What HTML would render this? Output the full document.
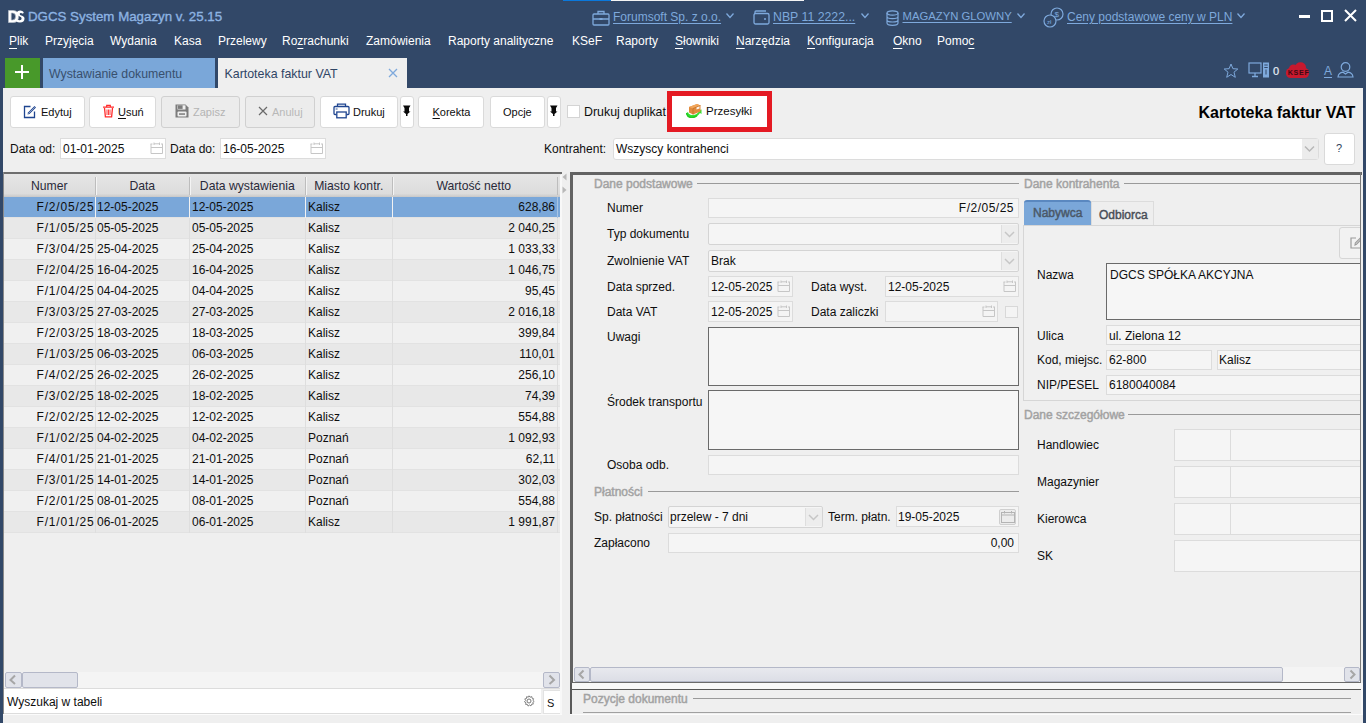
<!DOCTYPE html><html><head><meta charset="utf-8"><style>
html,body{margin:0;padding:0}
body{width:1366px;height:723px;overflow:hidden;position:relative;background:#324868;font-family:"Liberation Sans", sans-serif;}
div{box-sizing:border-box}
.t{position:absolute;white-space:nowrap;line-height:1}
.btn{position:absolute;background:#fff;border:1px solid #dadada;border-radius:3px;box-sizing:border-box}
.dis{background:#ececec;border-color:#d0d0d0}
.inp{position:absolute;background:#fff;border:1px solid #dcdcdc;box-sizing:border-box}
.ro{position:absolute;background:#f5f5f5;border:1px solid #dcdcdc;box-sizing:border-box}
.ta{position:absolute;background:#f6f6f6;border:1px solid #6a6a6a;box-sizing:border-box}
.u{text-decoration:underline;text-underline-offset:3px}
.lk{text-decoration:underline;text-underline-offset:2px}
.ub{text-decoration:underline;text-underline-offset:1.5px}
</style></head><body>
<div style="position:absolute;left:563px;top:0px;width:48px;height:1px;background:#0a78dc"></div>
<div style="position:absolute;left:611px;top:0px;width:193px;height:1px;background:#f4f4f4"></div>
<svg style="position:absolute;left:8px;top:10px" width="17" height="13" viewBox="0 0 17 13"><path d="M0.5 0.5 H5 Q10.5 0.5 10.5 6.5 Q10.5 12.5 5 12.5 H0.5 Z M3.2 3 V10 H4.8 Q7.6 10 7.6 6.5 Q7.6 3 4.8 3 Z" fill="#fff" fill-rule="evenodd" stroke="#b8c0cc" stroke-width="0.7"/><path d="M15.8 2.2 Q14.5 0.6 12.3 0.6 Q8.8 0.6 8.8 3.6 Q8.8 5.6 11.8 6.4 Q13.6 6.9 13.6 8.4 Q13.6 10.2 11.8 10.2 Q10 10.2 8.8 9 L8 11.3 Q9.6 12.6 12 12.6 Q16.5 12.6 16.5 8.6 Q16.5 6.4 13.3 5.5 Q11.7 5 11.7 3.9 Q11.7 2.9 12.8 2.9 Q14.1 2.9 15 3.8 Z" fill="#fff"/></svg>
<div class="t" style="left:28px;top:9.74px;font-size:13.3px;color:#8db3e2;-webkit-text-stroke:0.35px #8db3e2">DGCS System Magazyn v. 25.15</div>
<div class="t" style="left:9px;top:34.84px;font-size:12px;color:#ffffff;"><span class="u">P</span>lik</div>
<div class="t" style="left:45px;top:34.84px;font-size:12px;color:#ffffff;">Przyjęcia</div>
<div class="t" style="left:110px;top:34.84px;font-size:12px;color:#ffffff;">Wydania</div>
<div class="t" style="left:174px;top:34.84px;font-size:12px;color:#ffffff;">Kasa</div>
<div class="t" style="left:218px;top:34.84px;font-size:12px;color:#ffffff;">Przelewy</div>
<div class="t" style="left:282px;top:34.84px;font-size:12px;color:#ffffff;">Ro<span class="u">z</span>rachunki</div>
<div class="t" style="left:366px;top:34.84px;font-size:12px;color:#ffffff;">Zamówienia</div>
<div class="t" style="left:448px;top:34.84px;font-size:12px;color:#ffffff;">Raporty analityczne</div>
<div class="t" style="left:572px;top:34.84px;font-size:12px;color:#ffffff;">KSeF</div>
<div class="t" style="left:616px;top:34.84px;font-size:12px;color:#ffffff;">Raporty</div>
<div class="t" style="left:675px;top:34.84px;font-size:12px;color:#ffffff;"><span class="u">S</span>łowniki</div>
<div class="t" style="left:736px;top:34.84px;font-size:12px;color:#ffffff;"><span class="u">N</span>arzędzia</div>
<div class="t" style="left:807px;top:34.84px;font-size:12px;color:#ffffff;"><span class="u">K</span>onfiguracja</div>
<div class="t" style="left:893px;top:34.84px;font-size:12px;color:#ffffff;"><span class="u">O</span>kno</div>
<div class="t" style="left:937px;top:34.84px;font-size:12px;color:#ffffff;">Pomo<span class="u">c</span></div>
<svg style="position:absolute;left:592px;top:10px" width="18" height="16" viewBox="0 0 18 16"><rect x="1" y="4" width="16" height="11" rx="1" fill="none" stroke="#7ea9dc" stroke-width="1.3"/><path d="M6 4 V1.5 H12 V4 M1 9 H17" fill="none" stroke="#7ea9dc" stroke-width="1.3"/><rect x="7.5" y="8" width="3" height="2" fill="#7ea9dc"/></svg>
<div class="t" style="left:613px;top:10.84px;font-size:12px;color:#7ea9dc;text-decoration:underline;text-underline-offset:2px">Forumsoft Sp. z o.o.</div>
<svg style="position:absolute;left:725px;top:12px" width="10" height="7" viewBox="0 0 10 7"><path d="M1.5 1.5 L5 5.5 L8.5 1.5" fill="none" stroke="#7ea9dc" stroke-width="1.3"/></svg>
<svg style="position:absolute;left:753px;top:10px" width="17" height="15" viewBox="0 0 17 15"><path d="M2 4 L2 2 Q2 1 3 1 L13 1" fill="none" stroke="#7ea9dc" stroke-width="1.3"/><rect x="1" y="3.5" width="15" height="10.5" rx="1.5" fill="none" stroke="#7ea9dc" stroke-width="1.3"/><circle cx="12" cy="9" r="1" fill="#7ea9dc"/></svg>
<div class="t" style="left:773px;top:10.59px;font-size:12.3px;color:#7ea9dc;text-decoration:underline;text-underline-offset:2px">NBP 11 2222...</div>
<svg style="position:absolute;left:860px;top:12px" width="10" height="7" viewBox="0 0 10 7"><path d="M1.5 1.5 L5 5.5 L8.5 1.5" fill="none" stroke="#7ea9dc" stroke-width="1.3"/></svg>
<svg style="position:absolute;left:886px;top:10px" width="13" height="16" viewBox="0 0 13 16"><ellipse cx="6.5" cy="3" rx="5.5" ry="2.2" fill="none" stroke="#7ea9dc" stroke-width="1.2"/><path d="M1 3 V13 Q1 15.3 6.5 15.3 Q12 15.3 12 13 V3 M1 6.5 Q1 8.7 6.5 8.7 Q12 8.7 12 6.5 M1 10 Q1 12 6.5 12 Q12 12 12 10" fill="none" stroke="#7ea9dc" stroke-width="1.2"/></svg>
<div class="t" style="left:902.5px;top:11.43px;font-size:11.3px;color:#7ea9dc;text-decoration:underline;text-underline-offset:2px">MAGAZYN GLOWNY</div>
<svg style="position:absolute;left:1016px;top:12px" width="10" height="7" viewBox="0 0 10 7"><path d="M1.5 1.5 L5 5.5 L8.5 1.5" fill="none" stroke="#7ea9dc" stroke-width="1.3"/></svg>
<svg style="position:absolute;left:1043px;top:7px" width="21" height="21" viewBox="0 0 21 21"><circle cx="14" cy="7" r="6" fill="none" stroke="#7ea9dc" stroke-width="1.2"/><circle cx="7" cy="14" r="6" fill="#324868" stroke="#7ea9dc" stroke-width="1.2"/><text x="11.5" y="10" font-family="Liberation Sans" font-size="8" fill="#7ea9dc">$</text><text x="4" y="17" font-family="Liberation Sans" font-size="6" fill="#7ea9dc">zł</text></svg>
<div class="t" style="left:1067px;top:10.84px;font-size:12px;color:#7ea9dc;text-decoration:underline;text-underline-offset:2px">Ceny podstawowe ceny w PLN</div>
<svg style="position:absolute;left:1236px;top:12px" width="10" height="7" viewBox="0 0 10 7"><path d="M1.5 1.5 L5 5.5 L8.5 1.5" fill="none" stroke="#7ea9dc" stroke-width="1.3"/></svg>
<div style="position:absolute;left:1299px;top:15px;width:11px;height:2.5px;background:#fff"></div>
<div style="position:absolute;left:1321px;top:10px;width:12px;height:12px;border:2px solid #fff"></div>
<svg style="position:absolute;left:1344px;top:9px" width="13" height="13" viewBox="0 0 13 13"><path d="M1 1 L12 12 M12 1 L1 12" stroke="#fff" stroke-width="2"/></svg>
<svg style="position:absolute;left:1223px;top:63px" width="16" height="16" viewBox="0 0 16 16"><path d="M8 1 L9.9 5.7 L14.8 6 L11 9.2 L12.3 14.3 L8 11.5 L3.7 14.3 L5 9.2 L1.2 6 L6.1 5.7 Z" fill="none" stroke="#7ea9dc" stroke-width="1"/></svg>
<svg style="position:absolute;left:1248px;top:62px" width="22" height="16" viewBox="0 0 22 16"><rect x="1" y="1" width="12" height="10" fill="none" stroke="#7ea9dc" stroke-width="1.2"/><path d="M7 11 V14 M4 14.5 H10" stroke="#7ea9dc" stroke-width="1.3"/><rect x="15" y="0.5" width="6" height="15" fill="#7ea9dc"/><rect x="16.3" y="2.5" width="3.4" height="1" fill="#324868"/><rect x="16.3" y="5" width="3.4" height="1" fill="#324868"/><rect x="17.5" y="7.5" width="1" height="5" fill="#324868"/></svg>
<div class="t" style="left:1273px;top:65.69px;font-size:11px;color:#e8eef6;-webkit-text-stroke:0.2px #e8eef6">0</div>
<svg style="position:absolute;left:1286px;top:62px" width="24" height="17" viewBox="0 0 24 17"><g fill="#c8192e"><rect x="0" y="6" width="23" height="10" rx="4.5"/><ellipse cx="7.5" cy="6.5" rx="4.5" ry="4"/><ellipse cx="14.5" cy="5.2" rx="5.5" ry="5"/></g><text x="1.8" y="12.6" font-family="Liberation Sans" font-weight="bold" font-size="7.2" fill="#3c0a12" letter-spacing="0.6">KSEF</text></svg>
<div class="t" style="left:1324px;top:64.84px;font-size:12px;color:#7ea9dc;text-decoration:underline;text-underline-offset:2px">A</div>
<svg style="position:absolute;left:1337px;top:62px" width="17" height="16" viewBox="0 0 17 16"><circle cx="8.5" cy="5" r="4.3" fill="none" stroke="#7ea9dc" stroke-width="1.2"/><path d="M1 15 Q1.5 10.8 6 10.2 L8.5 12 L11 10.2 Q15.5 10.8 16 15 Z" fill="none" stroke="#7ea9dc" stroke-width="1.2"/></svg>
<div style="position:absolute;left:5px;top:58px;width:35px;height:30px;background:#48992a"></div>
<div style="position:absolute;left:15px;top:71px;width:14px;height:2px;background:#fff"></div>
<div style="position:absolute;left:21px;top:65px;width:2px;height:14px;background:#fff"></div>
<div style="position:absolute;left:43px;top:58px;width:172px;height:30px;background:#7aa7d9"></div>
<div class="t" style="left:49px;top:67.59px;font-size:12.3px;color:#38506e;">Wystawianie dokumentu</div>
<div style="position:absolute;left:218px;top:58px;width:189px;height:30px;background:#efefef"></div>
<div class="t" style="left:224.5px;top:67.50px;font-size:12.4px;color:#2f4565;">Kartoteka faktur VAT</div>
<svg style="position:absolute;left:388px;top:68px" width="10" height="10" viewBox="0 0 10 10"><path d="M1 1 L9 9 M9 1 L1 9" stroke="#7ea9dc" stroke-width="1.3"/></svg>
<div style="position:absolute;left:3px;top:88px;width:1360px;height:635px;background:#efefef"></div>
<div class="btn" style="left:10px;top:96px;width:75px;height:32px"></div>
<svg style="position:absolute;left:23px;top:104px" width="15" height="15" viewBox="0 0 15 15"><path d="M7.5 2.5 H1.5 V13.5 H11.5 V7.5" fill="none" stroke="#1f4590" stroke-width="1.3"/><path d="M4.5 10.5 L5 8.5 L11.5 2 L13 3.5 L6.5 10 Z" fill="#1f4590"/><path d="M5.3 9.7 L11.8 3.2" stroke="#fff" stroke-width="0.5"/></svg>
<div class="t" style="left:41px;top:106.69px;font-size:11px;color:#0e0e0e;">Edytuj</div>
<div class="btn" style="left:89px;top:96px;width:67px;height:32px"></div>
<svg style="position:absolute;left:102px;top:104px" width="13" height="14" viewBox="0 0 13 14"><path d="M1 3.2 H12 M4.7 3 V1.3 H8.3 V3" fill="none" stroke="#ff2b2b" stroke-width="1.2"/><path d="M2.5 4 L3.4 12.8 H9.6 L10.5 4" fill="none" stroke="#ff2b2b" stroke-width="1.3"/><path d="M5 5.5 V11 M6.5 5.5 V11 M8 5.5 V11" stroke="#ff2b2b" stroke-width="0.9"/></svg>
<div class="t" style="left:118px;top:106.69px;font-size:11px;color:#0e0e0e;"><span class="ub">U</span>suń</div>
<div class="btn dis" style="left:161px;top:96px;width:79px;height:32px"></div>
<svg style="position:absolute;left:175px;top:104px" width="14" height="14" viewBox="0 0 14 14"><path d="M0.5 0.5 H10.5 L13.5 3.5 V13.5 H0.5 Z" fill="#7c7c7c"/><rect x="2.5" y="1.3" width="8" height="4.2" fill="#efefef"/><rect x="3" y="1.3" width="4.6" height="3.6" fill="#7c7c7c"/><rect x="2.5" y="7.5" width="9" height="5" rx="1" fill="#efefef"/><rect x="4" y="9.3" width="6" height="1.5" fill="#7c7c7c"/></svg>
<div class="t" style="left:193px;top:106.69px;font-size:11px;color:#b4b4b4;">Zapisz</div>
<div class="btn dis" style="left:245px;top:96px;width:70px;height:32px"></div>
<svg style="position:absolute;left:258px;top:106px" width="10" height="10" viewBox="0 0 10 10"><path d="M1 1 L9 9 M9 1 L1 9" stroke="#6a6a6a" stroke-width="1.2"/></svg>
<div class="t" style="left:272px;top:106.69px;font-size:11px;color:#b8b8b8;">Anuluj</div>
<div class="btn" style="left:320px;top:96px;width:78px;height:32px"></div>
<svg style="position:absolute;left:333px;top:103px" width="17" height="16" viewBox="0 0 17 16"><path d="M4.5 3.5 V1.2 H12.5 V3.5" fill="none" stroke="#1f4590" stroke-width="1.3"/><path d="M3.5 11.5 H2 Q1 11.5 1 10.5 V4.5 Q1 3.5 2 3.5 H15 Q16 3.5 16 4.5 V10.5 Q16 11.5 15 11.5 H13.5" fill="none" stroke="#1f4590" stroke-width="1.3"/><rect x="3.8" y="9" width="9.4" height="5.8" fill="#fff" stroke="#1f4590" stroke-width="1.3"/><path d="M2.6 6 H4.6" stroke="#1f4590" stroke-width="0.9"/></svg>
<div class="t" style="left:353px;top:106.69px;font-size:11px;color:#0e0e0e;">Drukuj</div>
<div class="btn" style="left:400px;top:96px;width:14px;height:32px"></div>
<svg style="position:absolute;left:403px;top:105px" width="8" height="12" viewBox="0 0 8 12"><path d="M0 0.5 H7.5 L6 3 V6.5 H7.5 L4.5 9 V11 H3 V9 L0 6.5 H1.5 V3 Z" fill="#0a0a0a"/></svg>
<div class="btn" style="left:418px;top:96px;width:66px;height:32px"></div>
<div class="t" style="left:432.5px;top:106.69px;font-size:11px;color:#0e0e0e;"><span class="ub">K</span>orekta</div>
<div class="btn" style="left:490px;top:96px;width:55px;height:32px"></div>
<div class="t" style="left:503px;top:106.69px;font-size:11px;color:#0e0e0e;">Opcje</div>
<div class="btn" style="left:547px;top:96px;width:14px;height:32px"></div>
<svg style="position:absolute;left:550px;top:105px" width="8" height="12" viewBox="0 0 8 12"><path d="M0 0.5 H7.5 L6 3 V6.5 H7.5 L4.5 9 V11 H3 V9 L0 6.5 H1.5 V3 Z" fill="#0a0a0a"/></svg>
<div style="position:absolute;left:567px;top:105px;width:13px;height:13px;background:#fff;border:1px solid #d4d4d4"></div>
<div class="t" style="left:584px;top:105.50px;font-size:12.4px;color:#0e0e0e;">Drukuj duplikat</div>
<div style="position:absolute;left:667px;top:91px;width:105px;height:41px;border:5px solid #e41a23;background:#fff"></div>
<svg style="position:absolute;left:686px;top:103px" width="17" height="15" viewBox="0 0 17 15"><path d="M0.5 10 Q1 14.5 6 14.5 Q11 14.5 14 10 L15.5 11 L15.5 6.5 L11.5 7.5 L13 8.5 Q10 12.5 6 12 Q2.5 11.5 2 9 Z" fill="#33e030"/><path d="M3 4 L11 1 L14.5 2.5 L14.5 8.5 L7 11.5 L3 9.5 Z" fill="#e08a3c"/><path d="M3 4 L11 1 L14.5 2.5 L7 5.5 Z" fill="#f2a65a"/><path d="M7 5.5 V11.5 M7 5.5 L14.5 2.5" stroke="#b8641e" stroke-width="0.6" fill="none"/><path d="M10.5 4.5 L13.5 3.3 L13.5 5.5 L10.5 6.6 Z" fill="#fff" opacity="0.9"/><path d="M0.5 10 Q1 14.5 6 14.5 Q9 14.5 11 12.5" fill="none" stroke="#22c820" stroke-width="1.5"/></svg>
<div class="t" style="left:706px;top:106.27px;font-size:11.5px;color:#0e0e0e;">Przesyłki</div>
<div class="t" style="left:1198.5px;top:105.26px;font-size:16px;color:#000;font-weight:bold">Kartoteka faktur VAT</div>
<div class="t" style="left:10px;top:142.84px;font-size:12px;color:#0e0e0e;">Data od:</div>
<div class="inp" style="left:60px;top:138px;width:106px;height:21px;background:#fff;border-color:#dcdcdc"></div>
<svg style="position:absolute;left:150px;top:142px" width="14" height="13" viewBox="0 0 14 13"><path d="M1 2 V11.5 H12.5 V2 M0.5 2 H2.5 M11 2 H13 M1 5.5 H12.5 M4 0.5 V3 M9.5 0.5 V3 M4 1.8 H9.5" fill="none" stroke="#c6c6c6" stroke-width="1"/></svg>
<div class="t" style="left:63px;top:142.84px;font-size:12px;color:#0e0e0e;">01-01-2025</div>
<div class="t" style="left:170px;top:142.84px;font-size:12px;color:#0e0e0e;">Data do:</div>
<div class="inp" style="left:220px;top:138px;width:106px;height:21px;background:#fff;border-color:#dcdcdc"></div>
<svg style="position:absolute;left:310px;top:142px" width="14" height="13" viewBox="0 0 14 13"><path d="M1 2 V11.5 H12.5 V2 M0.5 2 H2.5 M11 2 H13 M1 5.5 H12.5 M4 0.5 V3 M9.5 0.5 V3 M4 1.8 H9.5" fill="none" stroke="#c6c6c6" stroke-width="1"/></svg>
<div class="t" style="left:223px;top:142.84px;font-size:12px;color:#0e0e0e;">16-05-2025</div>
<div class="t" style="left:544px;top:142.84px;font-size:12px;color:#0e0e0e;">Kontrahent:</div>
<div class="inp" style="left:613px;top:138px;width:706px;height:22px;border-radius:3px"></div>
<div class="t" style="left:616px;top:142.84px;font-size:12px;color:#0e0e0e;">Wszyscy kontrahenci</div>
<div style="position:absolute;left:1302px;top:139px;width:16px;height:20px;background:#ececec"></div>
<svg style="position:absolute;left:1304px;top:145px" width="11" height="8" viewBox="0 0 11 8"><path d="M1 1.5 L5.5 6 L10 1.5" fill="none" stroke="#b8b8b8" stroke-width="1.5"/></svg>
<div class="btn" style="left:1324px;top:133px;width:31px;height:32px"></div>
<div class="t" style="left:1336px;top:142.69px;font-size:11px;color:#30405a;">?</div>
<div style="position:absolute;left:3px;top:172px;width:1px;height:542px;background:#8a8a8a"></div>
<div style="position:absolute;left:4px;top:172px;width:558px;height:2px;background:#6e6e6e"></div>
<div style="position:absolute;left:4px;top:174px;width:558px;height:1px;background:#f6f6f6"></div>
<div style="position:absolute;left:4px;top:174px;width:557px;height:23px;background:linear-gradient(#e6e6e6,#dcdcdc 85%,#c8c8c8)"></div>
<div style="position:absolute;left:95px;top:177px;width:1px;height:18px;background:#bdbdbd"></div>
<div style="position:absolute;left:96px;top:177px;width:1px;height:18px;background:#f4f4f4"></div>
<div style="position:absolute;left:189px;top:177px;width:1px;height:18px;background:#bdbdbd"></div>
<div style="position:absolute;left:190px;top:177px;width:1px;height:18px;background:#f4f4f4"></div>
<div style="position:absolute;left:305px;top:177px;width:1px;height:18px;background:#bdbdbd"></div>
<div style="position:absolute;left:306px;top:177px;width:1px;height:18px;background:#f4f4f4"></div>
<div style="position:absolute;left:392px;top:177px;width:1px;height:18px;background:#bdbdbd"></div>
<div style="position:absolute;left:393px;top:177px;width:1px;height:18px;background:#f4f4f4"></div>
<div style="position:absolute;left:557px;top:177px;width:1px;height:18px;background:#bdbdbd"></div>
<div class="t" style="left:3.5px;top:179.86px;width:91.5px;text-align:center;font-size:12.2px;color:#2a2a3a">Numer</div>
<div class="t" style="left:95.5px;top:179.86px;width:93.5px;text-align:center;font-size:12.2px;color:#2a2a3a">Data</div>
<div class="t" style="left:189.5px;top:179.86px;width:115.5px;text-align:center;font-size:12.2px;color:#2a2a3a">Data wystawienia</div>
<div class="t" style="left:305.5px;top:179.86px;width:86.5px;text-align:center;font-size:12.2px;color:#2a2a3a">Miasto kontr.</div>
<div class="t" style="left:389.5px;top:179.86px;width:168.5px;text-align:center;font-size:12.2px;color:#2a2a3a">Wartość netto</div>
<div style="position:absolute;left:4px;top:197px;width:556px;height:21px;background:#7aa7d9"></div>
<div style="position:absolute;left:4px;top:217px;width:556px;height:1px;background:#e2e2e2"></div>
<div style="position:absolute;left:557px;top:197px;width:1px;height:21px;background:#a8c4e4"></div>
<div style="position:absolute;left:95px;top:197px;width:1px;height:21px;background:#f2f2f2"></div>
<div style="position:absolute;left:189px;top:197px;width:1px;height:21px;background:#f2f2f2"></div>
<div style="position:absolute;left:305px;top:197px;width:1px;height:21px;background:#f2f2f2"></div>
<div style="position:absolute;left:392px;top:197px;width:1px;height:21px;background:#f2f2f2"></div>
<div class="t" style="left:4px;top:201.36px;width:90.5px;text-align:right;font-size:12px;color:#0e0e0e;letter-spacing:0.8px">F/2/05/25</div>
<div class="t" style="left:97px;top:201.34px;font-size:12px;color:#0e0e0e;">12-05-2025</div>
<div class="t" style="left:192px;top:201.34px;font-size:12px;color:#0e0e0e;">12-05-2025</div>
<div class="t" style="left:308px;top:201.34px;font-size:12px;color:#0e0e0e;">Kalisz</div>
<div class="t" style="left:393px;top:201.36px;width:162px;text-align:right;font-size:12px;color:#0e0e0e">628,86</div>
<div style="position:absolute;left:4px;top:218px;width:556px;height:21px;background:#e8e8e8"></div>
<div style="position:absolute;left:4px;top:238px;width:556px;height:1px;background:#e2e2e2"></div>
<div style="position:absolute;left:557px;top:218px;width:1px;height:21px;background:#dedede"></div>
<div style="position:absolute;left:95px;top:218px;width:1px;height:21px;background:#dedede"></div>
<div style="position:absolute;left:189px;top:218px;width:1px;height:21px;background:#dedede"></div>
<div style="position:absolute;left:305px;top:218px;width:1px;height:21px;background:#dedede"></div>
<div style="position:absolute;left:392px;top:218px;width:1px;height:21px;background:#dedede"></div>
<div class="t" style="left:4px;top:222.36px;width:90.5px;text-align:right;font-size:12px;color:#0e0e0e;letter-spacing:0.8px">F/1/05/25</div>
<div class="t" style="left:97px;top:222.34px;font-size:12px;color:#0e0e0e;">05-05-2025</div>
<div class="t" style="left:192px;top:222.34px;font-size:12px;color:#0e0e0e;">05-05-2025</div>
<div class="t" style="left:308px;top:222.34px;font-size:12px;color:#0e0e0e;">Kalisz</div>
<div class="t" style="left:393px;top:222.36px;width:162px;text-align:right;font-size:12px;color:#0e0e0e">2 040,25</div>
<div style="position:absolute;left:4px;top:239px;width:556px;height:21px;background:#f0f0f0"></div>
<div style="position:absolute;left:4px;top:259px;width:556px;height:1px;background:#e2e2e2"></div>
<div style="position:absolute;left:557px;top:239px;width:1px;height:21px;background:#dedede"></div>
<div style="position:absolute;left:95px;top:239px;width:1px;height:21px;background:#dedede"></div>
<div style="position:absolute;left:189px;top:239px;width:1px;height:21px;background:#dedede"></div>
<div style="position:absolute;left:305px;top:239px;width:1px;height:21px;background:#dedede"></div>
<div style="position:absolute;left:392px;top:239px;width:1px;height:21px;background:#dedede"></div>
<div class="t" style="left:4px;top:243.36px;width:90.5px;text-align:right;font-size:12px;color:#0e0e0e;letter-spacing:0.8px">F/3/04/25</div>
<div class="t" style="left:97px;top:243.34px;font-size:12px;color:#0e0e0e;">25-04-2025</div>
<div class="t" style="left:192px;top:243.34px;font-size:12px;color:#0e0e0e;">25-04-2025</div>
<div class="t" style="left:308px;top:243.34px;font-size:12px;color:#0e0e0e;">Kalisz</div>
<div class="t" style="left:393px;top:243.36px;width:162px;text-align:right;font-size:12px;color:#0e0e0e">1 033,33</div>
<div style="position:absolute;left:4px;top:260px;width:556px;height:21px;background:#e8e8e8"></div>
<div style="position:absolute;left:4px;top:280px;width:556px;height:1px;background:#e2e2e2"></div>
<div style="position:absolute;left:557px;top:260px;width:1px;height:21px;background:#dedede"></div>
<div style="position:absolute;left:95px;top:260px;width:1px;height:21px;background:#dedede"></div>
<div style="position:absolute;left:189px;top:260px;width:1px;height:21px;background:#dedede"></div>
<div style="position:absolute;left:305px;top:260px;width:1px;height:21px;background:#dedede"></div>
<div style="position:absolute;left:392px;top:260px;width:1px;height:21px;background:#dedede"></div>
<div class="t" style="left:4px;top:264.36px;width:90.5px;text-align:right;font-size:12px;color:#0e0e0e;letter-spacing:0.8px">F/2/04/25</div>
<div class="t" style="left:97px;top:264.34px;font-size:12px;color:#0e0e0e;">16-04-2025</div>
<div class="t" style="left:192px;top:264.34px;font-size:12px;color:#0e0e0e;">16-04-2025</div>
<div class="t" style="left:308px;top:264.34px;font-size:12px;color:#0e0e0e;">Kalisz</div>
<div class="t" style="left:393px;top:264.36px;width:162px;text-align:right;font-size:12px;color:#0e0e0e">1 046,75</div>
<div style="position:absolute;left:4px;top:281px;width:556px;height:21px;background:#f0f0f0"></div>
<div style="position:absolute;left:4px;top:301px;width:556px;height:1px;background:#e2e2e2"></div>
<div style="position:absolute;left:557px;top:281px;width:1px;height:21px;background:#dedede"></div>
<div style="position:absolute;left:95px;top:281px;width:1px;height:21px;background:#dedede"></div>
<div style="position:absolute;left:189px;top:281px;width:1px;height:21px;background:#dedede"></div>
<div style="position:absolute;left:305px;top:281px;width:1px;height:21px;background:#dedede"></div>
<div style="position:absolute;left:392px;top:281px;width:1px;height:21px;background:#dedede"></div>
<div class="t" style="left:4px;top:285.36px;width:90.5px;text-align:right;font-size:12px;color:#0e0e0e;letter-spacing:0.8px">F/1/04/25</div>
<div class="t" style="left:97px;top:285.34px;font-size:12px;color:#0e0e0e;">04-04-2025</div>
<div class="t" style="left:192px;top:285.34px;font-size:12px;color:#0e0e0e;">04-04-2025</div>
<div class="t" style="left:308px;top:285.34px;font-size:12px;color:#0e0e0e;">Kalisz</div>
<div class="t" style="left:393px;top:285.36px;width:162px;text-align:right;font-size:12px;color:#0e0e0e">95,45</div>
<div style="position:absolute;left:4px;top:302px;width:556px;height:21px;background:#e8e8e8"></div>
<div style="position:absolute;left:4px;top:322px;width:556px;height:1px;background:#e2e2e2"></div>
<div style="position:absolute;left:557px;top:302px;width:1px;height:21px;background:#dedede"></div>
<div style="position:absolute;left:95px;top:302px;width:1px;height:21px;background:#dedede"></div>
<div style="position:absolute;left:189px;top:302px;width:1px;height:21px;background:#dedede"></div>
<div style="position:absolute;left:305px;top:302px;width:1px;height:21px;background:#dedede"></div>
<div style="position:absolute;left:392px;top:302px;width:1px;height:21px;background:#dedede"></div>
<div class="t" style="left:4px;top:306.36px;width:90.5px;text-align:right;font-size:12px;color:#0e0e0e;letter-spacing:0.8px">F/3/03/25</div>
<div class="t" style="left:97px;top:306.34px;font-size:12px;color:#0e0e0e;">27-03-2025</div>
<div class="t" style="left:192px;top:306.34px;font-size:12px;color:#0e0e0e;">27-03-2025</div>
<div class="t" style="left:308px;top:306.34px;font-size:12px;color:#0e0e0e;">Kalisz</div>
<div class="t" style="left:393px;top:306.36px;width:162px;text-align:right;font-size:12px;color:#0e0e0e">2 016,18</div>
<div style="position:absolute;left:4px;top:323px;width:556px;height:21px;background:#f0f0f0"></div>
<div style="position:absolute;left:4px;top:343px;width:556px;height:1px;background:#e2e2e2"></div>
<div style="position:absolute;left:557px;top:323px;width:1px;height:21px;background:#dedede"></div>
<div style="position:absolute;left:95px;top:323px;width:1px;height:21px;background:#dedede"></div>
<div style="position:absolute;left:189px;top:323px;width:1px;height:21px;background:#dedede"></div>
<div style="position:absolute;left:305px;top:323px;width:1px;height:21px;background:#dedede"></div>
<div style="position:absolute;left:392px;top:323px;width:1px;height:21px;background:#dedede"></div>
<div class="t" style="left:4px;top:327.36px;width:90.5px;text-align:right;font-size:12px;color:#0e0e0e;letter-spacing:0.8px">F/2/03/25</div>
<div class="t" style="left:97px;top:327.34px;font-size:12px;color:#0e0e0e;">18-03-2025</div>
<div class="t" style="left:192px;top:327.34px;font-size:12px;color:#0e0e0e;">18-03-2025</div>
<div class="t" style="left:308px;top:327.34px;font-size:12px;color:#0e0e0e;">Kalisz</div>
<div class="t" style="left:393px;top:327.36px;width:162px;text-align:right;font-size:12px;color:#0e0e0e">399,84</div>
<div style="position:absolute;left:4px;top:344px;width:556px;height:21px;background:#e8e8e8"></div>
<div style="position:absolute;left:4px;top:364px;width:556px;height:1px;background:#e2e2e2"></div>
<div style="position:absolute;left:557px;top:344px;width:1px;height:21px;background:#dedede"></div>
<div style="position:absolute;left:95px;top:344px;width:1px;height:21px;background:#dedede"></div>
<div style="position:absolute;left:189px;top:344px;width:1px;height:21px;background:#dedede"></div>
<div style="position:absolute;left:305px;top:344px;width:1px;height:21px;background:#dedede"></div>
<div style="position:absolute;left:392px;top:344px;width:1px;height:21px;background:#dedede"></div>
<div class="t" style="left:4px;top:348.36px;width:90.5px;text-align:right;font-size:12px;color:#0e0e0e;letter-spacing:0.8px">F/1/03/25</div>
<div class="t" style="left:97px;top:348.34px;font-size:12px;color:#0e0e0e;">06-03-2025</div>
<div class="t" style="left:192px;top:348.34px;font-size:12px;color:#0e0e0e;">06-03-2025</div>
<div class="t" style="left:308px;top:348.34px;font-size:12px;color:#0e0e0e;">Kalisz</div>
<div class="t" style="left:393px;top:348.36px;width:162px;text-align:right;font-size:12px;color:#0e0e0e">110,01</div>
<div style="position:absolute;left:4px;top:365px;width:556px;height:21px;background:#f0f0f0"></div>
<div style="position:absolute;left:4px;top:385px;width:556px;height:1px;background:#e2e2e2"></div>
<div style="position:absolute;left:557px;top:365px;width:1px;height:21px;background:#dedede"></div>
<div style="position:absolute;left:95px;top:365px;width:1px;height:21px;background:#dedede"></div>
<div style="position:absolute;left:189px;top:365px;width:1px;height:21px;background:#dedede"></div>
<div style="position:absolute;left:305px;top:365px;width:1px;height:21px;background:#dedede"></div>
<div style="position:absolute;left:392px;top:365px;width:1px;height:21px;background:#dedede"></div>
<div class="t" style="left:4px;top:369.36px;width:90.5px;text-align:right;font-size:12px;color:#0e0e0e;letter-spacing:0.8px">F/4/02/25</div>
<div class="t" style="left:97px;top:369.34px;font-size:12px;color:#0e0e0e;">26-02-2025</div>
<div class="t" style="left:192px;top:369.34px;font-size:12px;color:#0e0e0e;">26-02-2025</div>
<div class="t" style="left:308px;top:369.34px;font-size:12px;color:#0e0e0e;">Kalisz</div>
<div class="t" style="left:393px;top:369.36px;width:162px;text-align:right;font-size:12px;color:#0e0e0e">256,10</div>
<div style="position:absolute;left:4px;top:386px;width:556px;height:21px;background:#e8e8e8"></div>
<div style="position:absolute;left:4px;top:406px;width:556px;height:1px;background:#e2e2e2"></div>
<div style="position:absolute;left:557px;top:386px;width:1px;height:21px;background:#dedede"></div>
<div style="position:absolute;left:95px;top:386px;width:1px;height:21px;background:#dedede"></div>
<div style="position:absolute;left:189px;top:386px;width:1px;height:21px;background:#dedede"></div>
<div style="position:absolute;left:305px;top:386px;width:1px;height:21px;background:#dedede"></div>
<div style="position:absolute;left:392px;top:386px;width:1px;height:21px;background:#dedede"></div>
<div class="t" style="left:4px;top:390.36px;width:90.5px;text-align:right;font-size:12px;color:#0e0e0e;letter-spacing:0.8px">F/3/02/25</div>
<div class="t" style="left:97px;top:390.34px;font-size:12px;color:#0e0e0e;">18-02-2025</div>
<div class="t" style="left:192px;top:390.34px;font-size:12px;color:#0e0e0e;">18-02-2025</div>
<div class="t" style="left:308px;top:390.34px;font-size:12px;color:#0e0e0e;">Kalisz</div>
<div class="t" style="left:393px;top:390.36px;width:162px;text-align:right;font-size:12px;color:#0e0e0e">74,39</div>
<div style="position:absolute;left:4px;top:407px;width:556px;height:21px;background:#f0f0f0"></div>
<div style="position:absolute;left:4px;top:427px;width:556px;height:1px;background:#e2e2e2"></div>
<div style="position:absolute;left:557px;top:407px;width:1px;height:21px;background:#dedede"></div>
<div style="position:absolute;left:95px;top:407px;width:1px;height:21px;background:#dedede"></div>
<div style="position:absolute;left:189px;top:407px;width:1px;height:21px;background:#dedede"></div>
<div style="position:absolute;left:305px;top:407px;width:1px;height:21px;background:#dedede"></div>
<div style="position:absolute;left:392px;top:407px;width:1px;height:21px;background:#dedede"></div>
<div class="t" style="left:4px;top:411.36px;width:90.5px;text-align:right;font-size:12px;color:#0e0e0e;letter-spacing:0.8px">F/2/02/25</div>
<div class="t" style="left:97px;top:411.34px;font-size:12px;color:#0e0e0e;">12-02-2025</div>
<div class="t" style="left:192px;top:411.34px;font-size:12px;color:#0e0e0e;">12-02-2025</div>
<div class="t" style="left:308px;top:411.34px;font-size:12px;color:#0e0e0e;">Kalisz</div>
<div class="t" style="left:393px;top:411.36px;width:162px;text-align:right;font-size:12px;color:#0e0e0e">554,88</div>
<div style="position:absolute;left:4px;top:428px;width:556px;height:21px;background:#e8e8e8"></div>
<div style="position:absolute;left:4px;top:448px;width:556px;height:1px;background:#e2e2e2"></div>
<div style="position:absolute;left:557px;top:428px;width:1px;height:21px;background:#dedede"></div>
<div style="position:absolute;left:95px;top:428px;width:1px;height:21px;background:#dedede"></div>
<div style="position:absolute;left:189px;top:428px;width:1px;height:21px;background:#dedede"></div>
<div style="position:absolute;left:305px;top:428px;width:1px;height:21px;background:#dedede"></div>
<div style="position:absolute;left:392px;top:428px;width:1px;height:21px;background:#dedede"></div>
<div class="t" style="left:4px;top:432.36px;width:90.5px;text-align:right;font-size:12px;color:#0e0e0e;letter-spacing:0.8px">F/1/02/25</div>
<div class="t" style="left:97px;top:432.34px;font-size:12px;color:#0e0e0e;">04-02-2025</div>
<div class="t" style="left:192px;top:432.34px;font-size:12px;color:#0e0e0e;">04-02-2025</div>
<div class="t" style="left:308px;top:432.34px;font-size:12px;color:#0e0e0e;">Poznań</div>
<div class="t" style="left:393px;top:432.36px;width:162px;text-align:right;font-size:12px;color:#0e0e0e">1 092,93</div>
<div style="position:absolute;left:4px;top:449px;width:556px;height:21px;background:#f0f0f0"></div>
<div style="position:absolute;left:4px;top:469px;width:556px;height:1px;background:#e2e2e2"></div>
<div style="position:absolute;left:557px;top:449px;width:1px;height:21px;background:#dedede"></div>
<div style="position:absolute;left:95px;top:449px;width:1px;height:21px;background:#dedede"></div>
<div style="position:absolute;left:189px;top:449px;width:1px;height:21px;background:#dedede"></div>
<div style="position:absolute;left:305px;top:449px;width:1px;height:21px;background:#dedede"></div>
<div style="position:absolute;left:392px;top:449px;width:1px;height:21px;background:#dedede"></div>
<div class="t" style="left:4px;top:453.36px;width:90.5px;text-align:right;font-size:12px;color:#0e0e0e;letter-spacing:0.8px">F/4/01/25</div>
<div class="t" style="left:97px;top:453.34px;font-size:12px;color:#0e0e0e;">21-01-2025</div>
<div class="t" style="left:192px;top:453.34px;font-size:12px;color:#0e0e0e;">21-01-2025</div>
<div class="t" style="left:308px;top:453.34px;font-size:12px;color:#0e0e0e;">Poznań</div>
<div class="t" style="left:393px;top:453.36px;width:162px;text-align:right;font-size:12px;color:#0e0e0e">62,11</div>
<div style="position:absolute;left:4px;top:470px;width:556px;height:21px;background:#e8e8e8"></div>
<div style="position:absolute;left:4px;top:490px;width:556px;height:1px;background:#e2e2e2"></div>
<div style="position:absolute;left:557px;top:470px;width:1px;height:21px;background:#dedede"></div>
<div style="position:absolute;left:95px;top:470px;width:1px;height:21px;background:#dedede"></div>
<div style="position:absolute;left:189px;top:470px;width:1px;height:21px;background:#dedede"></div>
<div style="position:absolute;left:305px;top:470px;width:1px;height:21px;background:#dedede"></div>
<div style="position:absolute;left:392px;top:470px;width:1px;height:21px;background:#dedede"></div>
<div class="t" style="left:4px;top:474.36px;width:90.5px;text-align:right;font-size:12px;color:#0e0e0e;letter-spacing:0.8px">F/3/01/25</div>
<div class="t" style="left:97px;top:474.34px;font-size:12px;color:#0e0e0e;">14-01-2025</div>
<div class="t" style="left:192px;top:474.34px;font-size:12px;color:#0e0e0e;">14-01-2025</div>
<div class="t" style="left:308px;top:474.34px;font-size:12px;color:#0e0e0e;">Poznań</div>
<div class="t" style="left:393px;top:474.36px;width:162px;text-align:right;font-size:12px;color:#0e0e0e">302,03</div>
<div style="position:absolute;left:4px;top:491px;width:556px;height:21px;background:#f0f0f0"></div>
<div style="position:absolute;left:4px;top:511px;width:556px;height:1px;background:#e2e2e2"></div>
<div style="position:absolute;left:557px;top:491px;width:1px;height:21px;background:#dedede"></div>
<div style="position:absolute;left:95px;top:491px;width:1px;height:21px;background:#dedede"></div>
<div style="position:absolute;left:189px;top:491px;width:1px;height:21px;background:#dedede"></div>
<div style="position:absolute;left:305px;top:491px;width:1px;height:21px;background:#dedede"></div>
<div style="position:absolute;left:392px;top:491px;width:1px;height:21px;background:#dedede"></div>
<div class="t" style="left:4px;top:495.36px;width:90.5px;text-align:right;font-size:12px;color:#0e0e0e;letter-spacing:0.8px">F/2/01/25</div>
<div class="t" style="left:97px;top:495.34px;font-size:12px;color:#0e0e0e;">08-01-2025</div>
<div class="t" style="left:192px;top:495.34px;font-size:12px;color:#0e0e0e;">08-01-2025</div>
<div class="t" style="left:308px;top:495.34px;font-size:12px;color:#0e0e0e;">Poznań</div>
<div class="t" style="left:393px;top:495.36px;width:162px;text-align:right;font-size:12px;color:#0e0e0e">554,88</div>
<div style="position:absolute;left:4px;top:512px;width:556px;height:21px;background:#e8e8e8"></div>
<div style="position:absolute;left:4px;top:532px;width:556px;height:1px;background:#e2e2e2"></div>
<div style="position:absolute;left:557px;top:512px;width:1px;height:21px;background:#dedede"></div>
<div style="position:absolute;left:95px;top:512px;width:1px;height:21px;background:#dedede"></div>
<div style="position:absolute;left:189px;top:512px;width:1px;height:21px;background:#dedede"></div>
<div style="position:absolute;left:305px;top:512px;width:1px;height:21px;background:#dedede"></div>
<div style="position:absolute;left:392px;top:512px;width:1px;height:21px;background:#dedede"></div>
<div class="t" style="left:4px;top:516.36px;width:90.5px;text-align:right;font-size:12px;color:#0e0e0e;letter-spacing:0.8px">F/1/01/25</div>
<div class="t" style="left:97px;top:516.34px;font-size:12px;color:#0e0e0e;">06-01-2025</div>
<div class="t" style="left:192px;top:516.34px;font-size:12px;color:#0e0e0e;">06-01-2025</div>
<div class="t" style="left:308px;top:516.34px;font-size:12px;color:#0e0e0e;">Kalisz</div>
<div class="t" style="left:393px;top:516.36px;width:162px;text-align:right;font-size:12px;color:#0e0e0e">1 991,87</div>
<div style="position:absolute;left:4px;top:672px;width:557px;height:16px;background:#f4f4f4"></div>
<div style="position:absolute;left:5px;top:672px;width:17px;height:16px;background:#e1e3ea;border:1px solid #b4b8c8;border-radius:2px;box-sizing:border-box"></div>
<svg style="position:absolute;left:5px;top:672px" width="17" height="16" viewBox="0 0 17 16"><path d="M10 3.5 L5.5 8 L10 12" fill="none" stroke="#a6a6a6" stroke-width="2"/></svg>
<div style="position:absolute;left:22px;top:672px;width:56px;height:16px;background:#e1e3ea;border:1px solid #b4b8c8;border-radius:2px;box-sizing:border-box"></div>
<div style="position:absolute;left:543px;top:672px;width:17px;height:16px;background:#e1e3ea;border:1px solid #b4b8c8;border-radius:2px;box-sizing:border-box"></div>
<svg style="position:absolute;left:543px;top:672px" width="17" height="16" viewBox="0 0 17 16"><path d="M6.5 3.5 L11 8 L6.5 12" fill="none" stroke="#a6a6a6" stroke-width="2"/></svg>
<div style="position:absolute;left:4px;top:688px;width:557px;height:1px;background:#dcdcdc"></div>
<div style="position:absolute;left:4px;top:689px;width:537px;height:25px;background:#fff;border-bottom:1px solid #dcdcdc"></div>
<div class="t" style="left:7px;top:695.84px;font-size:12px;color:#0e0e0e;">Wyszukaj w tabeli</div>
<svg style="position:absolute;left:523px;top:695px" width="12" height="12" viewBox="0 0 12 12"><circle cx="6" cy="6" r="2" fill="none" stroke="#777" stroke-width="1"/><path d="M6 0.8 L7 2.2 L8.8 1.6 L9 3.2 L10.6 3.7 L9.9 5.3 L11.2 6.5 L9.8 7.4 L10.3 9.1 L8.6 9.2 L8 10.9 L6.5 10 L5 11.1 L4.4 9.4 L2.6 9.4 L3 7.7 L1.4 6.8 L2.6 5.5 L1.8 3.9 L3.5 3.5 L3.6 1.7 L5.3 2.2 Z" fill="none" stroke="#777" stroke-width="0.9"/></svg>
<div style="position:absolute;left:543px;top:690px;width:18px;height:24px;background:#fff;border:1px solid #e2e2e2"></div>
<div class="t" style="left:547px;top:697.69px;font-size:11px;color:#111;">S</div>
<svg style="position:absolute;left:561px;top:172px" width="8" height="24" viewBox="0 0 8 24"><path d="M5.5 1.5 L1.5 5 L5.5 8.5 Z" fill="#b8b8b8"/><path d="M1.5 14.5 L5.5 18 L1.5 21.5 Z" fill="#b8b8b8"/></svg>
<div style="position:absolute;left:570px;top:172px;width:3px;height:511px;background:#636363"></div>
<div style="position:absolute;left:570px;top:683px;width:2px;height:31px;background:#5a5a5a"></div>
<div style="position:absolute;left:570px;top:172px;width:792px;height:3px;background:#636363"></div>
<div style="position:absolute;left:1360px;top:172px;width:1px;height:511px;background:#7a7a7a"></div>
<div class="t" style="left:594px;top:177.84px;font-size:12px;color:#a2a2a2;-webkit-text-stroke:0.45px #a2a2a2">Dane podstawowe</div>
<div style="position:absolute;left:697px;top:183px;width:322px;height:1px;background:#9a9a9a"></div>
<div class="t" style="left:1024px;top:177.84px;font-size:12px;color:#a2a2a2;-webkit-text-stroke:0.45px #a2a2a2">Dane kontrahenta</div>
<div style="position:absolute;left:1124px;top:183px;width:236px;height:1px;background:#9a9a9a"></div>
<div style="position:absolute;left:1019px;top:183px;width:0px;height:0px;"></div>
<div class="t" style="left:607px;top:201.84px;font-size:12px;color:#0e0e0e;">Numer</div>
<div class="t" style="left:607px;top:227.84px;font-size:12px;color:#0e0e0e;">Typ dokumentu</div>
<div class="t" style="left:607px;top:254.84px;font-size:12px;color:#0e0e0e;">Zwolnienie VAT</div>
<div class="t" style="left:607px;top:280.84px;font-size:12px;color:#0e0e0e;">Data sprzed.</div>
<div class="t" style="left:607px;top:305.84px;font-size:12px;color:#0e0e0e;">Data VAT</div>
<div class="t" style="left:607px;top:330.84px;font-size:12px;color:#0e0e0e;">Uwagi</div>
<div class="t" style="left:607px;top:395.84px;font-size:12px;color:#0e0e0e;">Środek transportu</div>
<div class="t" style="left:607px;top:458.84px;font-size:12px;color:#0e0e0e;">Osoba odb.</div>
<div class="ro" style="left:708px;top:198px;width:311px;height:20px"></div>
<div class="t" style="left:708px;top:201.84px;width:306px;text-align:right;font-size:12px;color:#0e0e0e;letter-spacing:0.5px">F/2/05/25</div>
<div class="ro" style="left:708px;top:223px;width:311px;height:22px;border-color:#d4d4d4;border-radius:2px"></div>
<div style="position:absolute;left:1001px;top:225px;width:17px;height:18px;background:#ededed;border-left:1px solid #dedede;box-sizing:border-box"></div>
<svg style="position:absolute;left:1004px;top:231px" width="11" height="7" viewBox="0 0 11 7"><path d="M1 1 L5.5 5.5 L10 1" fill="none" stroke="#c6c6c6" stroke-width="1.5"/></svg>
<div class="ro" style="left:708px;top:250px;width:311px;height:22px;border-color:#d4d4d4;border-radius:2px"></div>
<div style="position:absolute;left:1001px;top:252px;width:17px;height:18px;background:#ededed;border-left:1px solid #dedede;box-sizing:border-box"></div>
<svg style="position:absolute;left:1004px;top:258px" width="11" height="7" viewBox="0 0 11 7"><path d="M1 1 L5.5 5.5 L10 1" fill="none" stroke="#c6c6c6" stroke-width="1.5"/></svg>
<div class="t" style="left:711px;top:254.84px;font-size:12px;color:#0e0e0e;">Brak</div>
<div class="inp" style="left:708px;top:276px;width:85px;height:21px;background:#f4f4f4;border-color:#dcdcdc"></div>
<svg style="position:absolute;left:777px;top:280px" width="14" height="13" viewBox="0 0 14 13"><path d="M1 2 V11.5 H12.5 V2 M0.5 2 H2.5 M11 2 H13 M1 5.5 H12.5 M4 0.5 V3 M9.5 0.5 V3 M4 1.8 H9.5" fill="none" stroke="#c6c6c6" stroke-width="1"/></svg>
<div class="t" style="left:711px;top:280.84px;font-size:12px;color:#0e0e0e;">12-05-2025</div>
<div class="t" style="left:811px;top:280.84px;font-size:12px;color:#0e0e0e;">Data wyst.</div>
<div class="inp" style="left:885px;top:276px;width:134px;height:21px;background:#f4f4f4;border-color:#dcdcdc"></div>
<svg style="position:absolute;left:1003px;top:280px" width="14" height="13" viewBox="0 0 14 13"><path d="M1 2 V11.5 H12.5 V2 M0.5 2 H2.5 M11 2 H13 M1 5.5 H12.5 M4 0.5 V3 M9.5 0.5 V3 M4 1.8 H9.5" fill="none" stroke="#c6c6c6" stroke-width="1"/></svg>
<div class="t" style="left:888px;top:280.84px;font-size:12px;color:#0e0e0e;">12-05-2025</div>
<div class="inp" style="left:708px;top:301px;width:85px;height:21px;background:#f4f4f4;border-color:#dcdcdc"></div>
<svg style="position:absolute;left:777px;top:305px" width="14" height="13" viewBox="0 0 14 13"><path d="M1 2 V11.5 H12.5 V2 M0.5 2 H2.5 M11 2 H13 M1 5.5 H12.5 M4 0.5 V3 M9.5 0.5 V3 M4 1.8 H9.5" fill="none" stroke="#c6c6c6" stroke-width="1"/></svg>
<div class="t" style="left:711px;top:305.84px;font-size:12px;color:#0e0e0e;">12-05-2025</div>
<div class="t" style="left:811px;top:305.84px;font-size:12px;color:#0e0e0e;">Data zaliczki</div>
<div class="inp" style="left:885px;top:301px;width:113px;height:21px;background:#f4f4f4;border-color:#dcdcdc"></div>
<svg style="position:absolute;left:982px;top:305px" width="14" height="13" viewBox="0 0 14 13"><path d="M1 2 V11.5 H12.5 V2 M0.5 2 H2.5 M11 2 H13 M1 5.5 H12.5 M4 0.5 V3 M9.5 0.5 V3 M4 1.8 H9.5" fill="none" stroke="#c6c6c6" stroke-width="1"/></svg>
<div style="position:absolute;left:1005px;top:306px;width:13px;height:12px;background:#f4f4f4;border:1px solid #d8d8d8"></div>
<div class="ta" style="left:708px;top:327px;width:311px;height:59px"></div>
<div class="ta" style="left:708px;top:390px;width:311px;height:60px"></div>
<div class="ro" style="left:708px;top:455px;width:311px;height:20px"></div>
<div class="t" style="left:594px;top:485.84px;font-size:12px;color:#a2a2a2;-webkit-text-stroke:0.45px #a2a2a2">Płatności</div>
<div style="position:absolute;left:648px;top:491px;width:371px;height:1px;background:#9a9a9a"></div>
<div class="t" style="left:594px;top:510.84px;font-size:12px;color:#0e0e0e;">Sp. płatności</div>
<div class="ro" style="left:668px;top:506px;width:155px;height:22px;border-color:#d4d4d4;border-radius:2px"></div>
<div style="position:absolute;left:805px;top:508px;width:17px;height:18px;background:#ededed;border-left:1px solid #dedede;box-sizing:border-box"></div>
<svg style="position:absolute;left:808px;top:514px" width="11" height="7" viewBox="0 0 11 7"><path d="M1 1 L5.5 5.5 L10 1" fill="none" stroke="#c6c6c6" stroke-width="1.5"/></svg>
<div class="t" style="left:670px;top:510.84px;font-size:12px;color:#0e0e0e;">przelew - 7 dni</div>
<div class="t" style="left:828px;top:510.84px;font-size:12px;color:#0e0e0e;">Term. płatn.</div>
<div class="ro" style="left:896px;top:506px;width:123px;height:21px"></div>
<div class="t" style="left:898px;top:510.84px;font-size:12px;color:#0e0e0e;">19-05-2025</div>
<div style="position:absolute;left:999px;top:509px;width:17px;height:16px;background:#ececec;border:1px solid #cfcfcf;border-radius:2px;box-sizing:border-box"></div>
<svg style="position:absolute;left:1001px;top:510px" width="14" height="13" viewBox="0 0 14 13"><rect x="0.5" y="2.5" width="13" height="10" fill="none" stroke="#b4b4b4" stroke-width="1"/><path d="M0.5 5 H13.5 M3.5 1 V3.5 M10.5 1 V3.5" stroke="#b4b4b4" stroke-width="1"/></svg>
<div class="t" style="left:594px;top:536.84px;font-size:12px;color:#0e0e0e;">Zapłacono</div>
<div class="ro" style="left:668px;top:533px;width:351px;height:20px"></div>
<div class="t" style="left:668px;top:536.84px;width:346px;text-align:right;font-size:12px;color:#0e0e0e">0,00</div>
<div style="position:absolute;left:1024px;top:200px;width:67px;height:26px;background:#7aa7d9;border-top:2px solid #5a88c0;border-radius:3px 3px 0 0"></div>
<div class="t" style="left:1033px;top:206.84px;font-size:12px;color:#4a5868;-webkit-text-stroke:0.45px #4a5868">Nabywca</div>
<div style="position:absolute;left:1091px;top:201px;width:63px;height:25px;background:#eeeeee;border:1px solid #dcdcdc;border-bottom:none"></div>
<div class="t" style="left:1099px;top:208.84px;font-size:12px;color:#4a4e58;-webkit-text-stroke:0.45px #4a4e58">Odbiorca</div>
<div style="position:absolute;left:1023px;top:225px;width:340px;height:176px;border:1px solid #d6d6d6;border-right:none;background:#f0f0f0"></div>
<div style="position:absolute;left:1339px;top:227px;width:30px;height:32px;background:#f2f2f2;border:1px solid #d6d6d6;border-radius:3px"></div>
<svg style="position:absolute;left:1350px;top:236px" width="12" height="13" viewBox="0 0 12 13"><path d="M6 2 H1 V12 H11 V7" fill="none" stroke="#9a9a9a" stroke-width="1.2"/><path d="M5 9 L5.3 7 L10 2.3 L11.2 3.5 L6.5 8.2 Z" fill="none" stroke="#9a9a9a" stroke-width="1.1"/></svg>
<div class="t" style="left:1037px;top:268.84px;font-size:12px;color:#0e0e0e;">Nazwa</div>
<div class="ta" style="left:1106px;top:263px;width:260px;height:57px"></div>
<div class="t" style="left:1110px;top:268.84px;font-size:12px;color:#0e0e0e;">DGCS SPÓŁKA AKCYJNA</div>
<div class="t" style="left:1037px;top:329.84px;font-size:12px;color:#0e0e0e;">Ulica</div>
<div class="ro" style="left:1106px;top:325px;width:260px;height:20px"></div>
<div class="t" style="left:1109px;top:329.84px;font-size:12px;color:#0e0e0e;">ul. Zielona 12</div>
<div class="t" style="left:1037px;top:353.84px;font-size:12px;color:#0e0e0e;">Kod, miejsc.</div>
<div class="ro" style="left:1106px;top:350px;width:106px;height:20px"></div>
<div class="t" style="left:1109px;top:353.84px;font-size:12px;color:#0e0e0e;">62-800</div>
<div class="ro" style="left:1217px;top:350px;width:150px;height:20px"></div>
<div class="t" style="left:1219px;top:353.84px;font-size:12px;color:#0e0e0e;">Kalisz</div>
<div class="t" style="left:1037px;top:378.84px;font-size:12px;color:#0e0e0e;">NIP/PESEL</div>
<div class="ro" style="left:1106px;top:375px;width:260px;height:20px"></div>
<div class="t" style="left:1109px;top:378.84px;font-size:12px;color:#0e0e0e;">6180040084</div>
<div style="position:absolute;left:1361px;top:175px;width:2px;height:508px;background:#efefef"></div>
<div class="t" style="left:1024px;top:408.84px;font-size:12px;color:#a2a2a2;-webkit-text-stroke:0.45px #a2a2a2">Dane szczegółowe</div>
<div style="position:absolute;left:1128px;top:414px;width:232px;height:1px;background:#9a9a9a"></div>
<div class="t" style="left:1037px;top:438.84px;font-size:12px;color:#0e0e0e;">Handlowiec</div>
<div class="t" style="left:1037px;top:475.84px;font-size:12px;color:#0e0e0e;">Magazynier</div>
<div class="t" style="left:1037px;top:512.84px;font-size:12px;color:#0e0e0e;">Kierowca</div>
<div class="t" style="left:1037px;top:549.84px;font-size:12px;color:#0e0e0e;">SK</div>
<div class="ro" style="left:1174px;top:429px;width:57px;height:32px"></div>
<div class="ro" style="left:1230px;top:429px;width:135px;height:32px"></div>
<div class="ro" style="left:1174px;top:466px;width:57px;height:32px"></div>
<div class="ro" style="left:1230px;top:466px;width:135px;height:32px"></div>
<div class="ro" style="left:1174px;top:503px;width:57px;height:32px"></div>
<div class="ro" style="left:1230px;top:503px;width:135px;height:32px"></div>
<div class="ro" style="left:1174px;top:540px;width:191px;height:32px"></div>
<div style="position:absolute;left:1361px;top:400px;width:2px;height:283px;background:#efefef"></div>
<div style="position:absolute;left:1360px;top:172px;width:1px;height:511px;background:#7a7a7a"></div>
<div style="position:absolute;left:573px;top:667px;width:787px;height:15px;background:#f4f4f4"></div>
<div style="position:absolute;left:574px;top:667px;width:16px;height:15px;background:#e1e3ea;border:1px solid #b4b8c8;border-radius:2px;box-sizing:border-box"></div>
<svg style="position:absolute;left:574px;top:667px" width="16" height="15" viewBox="0 0 16 15"><path d="M9.5 3.5 L5.5 7.5 L9.5 11.5" fill="none" stroke="#a6a6a6" stroke-width="2"/></svg>
<div style="position:absolute;left:590px;top:667px;width:693px;height:15px;background:linear-gradient(#e8e9ee,#dcdee6);border:1px solid #b4b8c8;border-radius:2px;box-sizing:border-box"></div>
<div style="position:absolute;left:1344px;top:667px;width:16px;height:15px;background:#e1e3ea;border:1px solid #b4b8c8;border-radius:2px;box-sizing:border-box"></div>
<svg style="position:absolute;left:1344px;top:667px" width="16" height="15" viewBox="0 0 16 15"><path d="M6.5 3.5 L10.5 7.5 L6.5 11.5" fill="none" stroke="#a6a6a6" stroke-width="2"/></svg>
<div style="position:absolute;left:572px;top:683px;width:791px;height:6px;background:#f8f8f8"></div>
<div style="position:absolute;left:573px;top:682px;width:788px;height:1px;background:#6a6a6a"></div>
<div style="position:absolute;left:572px;top:689px;width:790px;height:1px;background:#555"></div>
<div style="position:absolute;left:1361px;top:683px;width:2px;height:31px;background:#f8f8f8"></div>
<div class="t" style="left:583px;top:692.84px;font-size:12px;color:#a2a2a2;-webkit-text-stroke:0.45px #a2a2a2">Pozycje dokumentu</div>
<div style="position:absolute;left:693px;top:698px;width:658px;height:1px;background:#9a9a9a"></div>
<div style="position:absolute;left:583px;top:712px;width:768px;height:1px;background:#a0a0a0"></div>
<div style="position:absolute;left:3px;top:714px;width:1360px;height:9px;background:#efefef"></div>
<div style="position:absolute;left:3px;top:714px;width:559px;height:1px;background:#fbfbfb"></div>
<div style="position:absolute;left:570px;top:714px;width:793px;height:1px;background:#fbfbfb"></div>
<div style="position:absolute;left:560px;top:175px;width:2px;height:539px;background:#f8f8f8"></div>
<div style="position:absolute;left:1363px;top:0px;width:3px;height:723px;background:#324868"></div>
</body></html>
